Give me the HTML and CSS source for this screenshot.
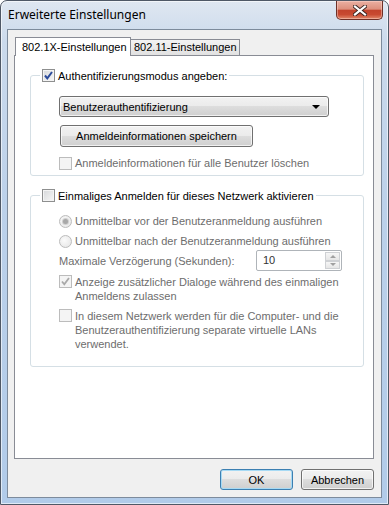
FILE: index.html
```html
<!DOCTYPE html>
<html lang="de">
<head>
  <meta charset="UTF-8" />
  <title>Erweiterte Einstellungen</title>
  <link rel="stylesheet" href="styles.css">
</head>
<body>
  <div class="window">
    <div class="titlebar">
      <span class="title">Erweiterte Einstellungen</span>
      <div class="close">
        <svg width="14" height="11" viewBox="0 0 14 11">
          <path d="M2 1.5 L12 9.5 M12 1.5 L2 9.5" stroke="#3a2420" stroke-width="4" stroke-linecap="square"/>
          <path d="M2 1.5 L12 9.5 M12 1.5 L2 9.5" stroke="#fff" stroke-width="2.2" stroke-linecap="square"/>
        </svg>
      </div>
    </div>

    <div class="client">
      <div class="tabstrip">
        <div class="tab active">802.1X-Einstellungen</div>
        <div class="tab">802.11-Einstellungen</div>
      </div>

      <div class="panel">
        <div class="group g1">
          <div class="group-head">
            <span class="cb">
              <svg width="11" height="11" viewBox="0 0 11 11"><path d="M2 5.5 L4.3 8.3 L9 2" fill="none" stroke="#2b4a9a" stroke-width="2"/></svg>
            </span>
            Authentifizierungsmodus angeben:
          </div>
          <div class="combo">
            <span>Benutzerauthentifizierung</span>
            <span class="arrow"></span>
          </div>
          <button class="btn save">Anmeldeinformationen speichern</button>
          <div class="check disabled clear-row">
            <span class="cb"></span>
            <span>Anmeldeinformationen für alle Benutzer löschen</span>
          </div>
        </div>

        <div class="group g2">
          <div class="group-head">
            <span class="cb"></span>
            Einmaliges Anmelden für dieses Netzwerk aktivieren
          </div>
          <div class="check disabled radio-row first">
            <span class="radio on"></span>
            <span>Unmittelbar vor der Benutzeranmeldung ausführen</span>
          </div>
          <div class="check disabled radio-row">
            <span class="radio"></span>
            <span>Unmittelbar nach der Benutzeranmeldung ausführen</span>
          </div>
          <div class="delay-row disabled">
            <span class="delay-label">Maximale Verzögerung (Sekunden):</span>
            <div class="spin">
              <span class="spin-value">10</span>
              <div class="spin-buttons">
                <span class="spin-btn"><span class="up"></span></span>
                <span class="spin-btn"><span class="down"></span></span>
              </div>
            </div>
          </div>
          <div class="check disabled multi dialogs-row">
            <span class="cb">
              <svg width="11" height="11" viewBox="0 0 11 11"><path d="M2 5.5 L4.3 8.3 L9 2" fill="none" stroke="#a9a9a9" stroke-width="1.8"/></svg>
            </span>
            <span>Anzeige zusätzlicher Dialoge während des einmaligen<br>Anmeldens zulassen</span>
          </div>
          <div class="check disabled multi vlan-row">
            <span class="cb"></span>
            <span>In diesem Netzwerk werden für die Computer- und die<br>Benutzerauthentifizierung separate virtuelle LANs<br>verwendet.</span>
          </div>
        </div>
      </div>

      <div class="footer">
        <button class="btn default">OK</button>
        <button class="btn">Abbrechen</button>
      </div>
    </div>
  </div>
</body>
</html>
```

FILE: styles.css
```css
* {
  box-sizing: border-box;
}
body {
  margin: 0;
  width: 389px;
  height: 505px;
  overflow: hidden;
  background: #fff;
  font-family: 'Liberation Sans', Arial, sans-serif;
  font-size: 11px;
  color: #000;
}
.window {
  width: 389px;
  height: 505px;
  display: flex;
  flex-direction: column;
  border: 1px solid #4f5866;
  border-radius: 7px 7px 0 0;
  background: linear-gradient(180deg, #dfe7f1 0%, #cbdaec 8%, #bcd1ea 40%, #b1cbe9 100%);
  box-shadow: inset 0 0 0 1px rgba(255, 255, 255, 0.6);
}
.titlebar {
  height: 28px;
  flex-shrink: 0;
  display: flex;
  align-items: flex-start;
  padding: 0 5px 0 7px;
}
.title {
  font-family: 'Noto Sans', 'Open Sans', sans-serif;
  font-size: 12px;
  line-height: 17px;
  padding-top: 5px;
}
.close {
  margin-left: auto;
  width: 47px;
  height: 19px;
  border: 1px solid #6e3027;
  border-top: none;
  border-radius: 0 0 5px 5px;
  background: linear-gradient(180deg, #eab0a2 0%, #dc8f7d 45%, #c2432c 52%, #c84a31 75%, #e1886a 100%);
  box-shadow: inset 0 0 0 1px rgba(255, 220, 210, 0.45);
  display: flex;
  align-items: center;
  justify-content: center;
}
.client {
  flex: 1;
  margin: 0 6px 6px;
  border: 1px solid #7d8b9c;
  background: #f0f0f0;
  padding: 7px 7px 0 6px;
  display: flex;
  flex-direction: column;
}
.tabstrip {
  height: 18px;
  display: flex;
  align-items: flex-end;
}
.tab {
  width: 110px;
  height: 16px;
  margin-left: -1px;
  padding-left: 3px;
  border: 1px solid #898c95;
  border-bottom: none;
  background: linear-gradient(180deg, #f3f3f3, #e1e1e1);
  line-height: 15px;
  white-space: nowrap;
}
.tab.active {
  position: relative;
  z-index: 1;
  width: 116px;
  height: 19px;
  margin: 0 0 -1px 1px;
  padding-left: 6px;
  background: #fff;
  line-height: 18px;
}
.panel {
  height: 404px;
  border: 1px solid #898c95;
  background: #fff;
  overflow: hidden;
}
.group {
  margin: 19px 9px 0 15px;
  padding: 0 8px 4px 28px;
  border: 1px solid #d5dfe5;
  border-radius: 3px;
}
.g2 {
  padding-bottom: 15px;
}
.group-head {
  display: flex;
  align-items: center;
  width: fit-content;
  height: 15px;
  margin: -8px 0 0 -19px;
  padding: 0 2px;
  background: #fff;
  white-space: nowrap;
}
.check {
  display: flex;
  align-items: center;
  line-height: 15px;
  white-space: nowrap;
}
.check.multi {
  align-items: flex-start;
  line-height: 14px;
}
.disabled {
  color: #6d6d6d;
}
.cb {
  width: 13px;
  height: 13px;
  flex-shrink: 0;
  margin-right: 3px;
  border: 1px solid #8e8f8f;
  background: linear-gradient(135deg, #d6d8da, #f7f7f7);
  box-shadow: inset 0 0 0 1px #f4f4f4;
  display: flex;
}
.disabled .cb {
  border-color: #bcbcbc;
  background: #f4f4f4;
  box-shadow: none;
}
.combo {
  margin-top: 13px;
  width: 270px;
  height: 21px;
  display: flex;
  align-items: center;
  padding: 0 8px 0 3px;
  border: 1px solid #707070;
  border-radius: 3px;
  background: linear-gradient(180deg, #f2f2f2 0%, #ebebeb 49%, #dddddd 50%, #cfcfcf 100%);
  box-shadow: inset 0 0 0 1px rgba(255, 255, 255, 0.7);
}
.arrow {
  margin-left: auto;
  border-left: 4px solid transparent;
  border-right: 4px solid transparent;
  border-top: 4px solid #000;
}
.btn {
  height: 21px;
  padding: 0;
  border: 1px solid #707070;
  border-radius: 3px;
  background: linear-gradient(180deg, #f2f2f2 0%, #ebebeb 49%, #dddddd 50%, #cfcfcf 100%);
  box-shadow: inset 0 0 0 1px rgba(255, 255, 255, 0.7);
  font: inherit;
  color: #000;
}
.save {
  display: block;
  width: 193px;
  height: 22px;
  margin: 8px 0 0 1px;
}
.clear-row {
  margin-top: 9px;
}
.radio {
  width: 13px;
  height: 13px;
  flex-shrink: 0;
  margin-right: 3px;
  border: 1px solid #bcbcbc;
  border-radius: 50%;
  background: radial-gradient(circle at 40% 40%, #fbfbfb, #e3e3e3);
  display: flex;
  align-items: center;
  justify-content: center;
}
.radio.on::after {
  content: '';
  width: 5px;
  height: 5px;
  border-radius: 50%;
  background: #a8a8a8;
  box-shadow: 0 0 0 1px #d0d0d0;
}
.radio-row {
  margin-top: 5px;
}
.radio-row.first {
  margin-top: 11px;
}
.delay-row {
  display: flex;
  align-items: center;
  height: 21px;
  margin-top: 1px;
}
.delay-label {
  width: 197px;
  white-space: nowrap;
}
.spin {
  width: 86px;
  height: 21px;
  display: flex;
  border: 1px solid #afb4b9;
  border-radius: 2px;
  background: #fff;
}
.spin-value {
  flex: 1;
  padding-left: 6px;
  line-height: 19px;
  color: #333;
}
.spin-buttons {
  width: 16px;
  display: flex;
  flex-direction: column;
  padding: 1px 1px 1px 0;
}
.spin-btn {
  flex: 1;
  border: 1px solid #cfd1d4;
  background: linear-gradient(180deg, #f6f6f6, #e6e6e6);
  display: flex;
  align-items: center;
  justify-content: center;
}
.up {
  border-left: 3px solid transparent;
  border-right: 3px solid transparent;
  border-bottom: 3px solid #a0a0a0;
}
.down {
  border-left: 3px solid transparent;
  border-right: 3px solid transparent;
  border-top: 3px solid #a0a0a0;
}
.dialogs-row {
  margin-top: 4px;
}
.vlan-row {
  margin-top: 6px;
}
.footer {
  display: flex;
  justify-content: flex-end;
  gap: 8px;
  margin-top: 10px;
}
.footer .btn {
  width: 73px;
}
.btn.default {
  border-color: #3c7fb1;
  box-shadow: inset 0 0 0 1px #a7daf4;
}
```
